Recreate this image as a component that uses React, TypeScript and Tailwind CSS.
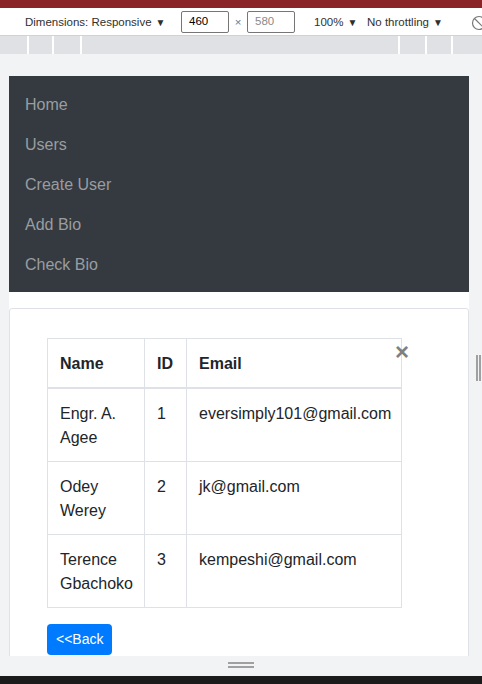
import React from "react";

const navLinks = ["Home", "Users", "Create User", "Add Bio", "Check Bio"];

const users = [
    { name: "Engr. A. Agee", id: 1, email: "eversimply101@gmail.com" },
    { name: "Odey Werey", id: 2, email: "jk@gmail.com" },
    { name: "Terence Gbachoko", id: 3, email: "kempeshi@gmail.com" },
];

function Caret() {
    return <span className="text-[10px] ml-[4px]">▼</span>;
}

function DevToolbar() {
    return (
        <div className="h-[28px] shrink-0 bg-white border-b border-[#cfd2d6] flex items-center text-[11.5px] text-[#303030] whitespace-nowrap overflow-hidden">
            <span className="w-[181px] shrink-0 pl-[25px] pt-[2px] overflow-hidden">
                Dimensions: Responsive<Caret />
            </span>
            <div className="w-[48px] h-[22px] shrink-0 border border-[#767676] rounded-[2px] px-[7px] flex items-center text-black">
                460
            </div>
            <span className="w-[18px] shrink-0 pt-[3px] text-center text-[#777]">×</span>
            <div className="w-[48px] h-[22px] shrink-0 border border-[#767676] rounded-[2px] px-[7px] flex items-center text-[#8a8a8a]">
                580
            </div>
            <span className="w-[53px] shrink-0 ml-[19px] pt-[2px]">
                100%<Caret />
            </span>
            <span className="w-[104px] shrink-0 pt-[2px]">
                No throttling<Caret />
            </span>
            <svg width="16" height="16" viewBox="0 0 16 16" className="shrink-0 mt-[2px] text-[#777]">
                <circle cx="8" cy="8" r="6.5" fill="none" stroke="currentColor" strokeWidth="1.2" />
                <path d="M3.5 3.5 L12.5 12.5" stroke="currentColor" strokeWidth="1.2" />
            </svg>
        </div>
    );
}

function Ruler() {
    return (
        <div className="h-[18px] shrink-0 bg-[#dfe1e5] flex">
            <div className="w-[27px]" />
            <div className="w-[25px] border-l-2 border-white" />
            <div className="w-[28px] border-l-2 border-white" />
            <div className="flex-1 border-l-2 border-white" />
            <div className="w-[27px] border-l-2 border-white" />
            <div className="w-[26px] border-l-2 border-white" />
            <div className="w-[31px] border-l-2 border-white" />
        </div>
    );
}

function Page() {
    return (
        <div className="w-[460px] h-[580px] shrink-0 bg-white overflow-hidden text-[#212529] text-base">

            {/* Navbar */}
            <nav className="bg-[#343a40] pt-[9px] pb-[7px]">
                {navLinks.map((link) => (
                    <div key={link} className="px-4 py-2 leading-6 text-[#9a9da0]">
                        {link}
                    </div>
                ))}
            </nav>

            {/* Card */}
            <div className="mt-4 border border-[#dee2e6] rounded-[3px] relative pl-[37px] pt-[29px] pb-6">
                <span className="absolute left-[385px] top-[31px] text-[24px] font-bold leading-none text-[#808080]">
                    ×
                </span>

                <table className="table-fixed border-collapse w-[354px]">
                    <colgroup>
                        <col className="w-[97px]" />
                        <col className="w-[42px]" />
                        <col className="w-[215px]" />
                    </colgroup>
                    <thead>
                        <tr>
                            <th className="border border-b-2 border-[#dee2e6] px-3 pt-[13px] pb-[11px] leading-6 text-left font-bold">Name</th>
                            <th className="border border-b-2 border-[#dee2e6] px-3 pt-[13px] pb-[11px] leading-6 text-left font-bold">ID</th>
                            <th className="border border-b-2 border-[#dee2e6] px-3 pt-[13px] pb-[11px] leading-6 text-left font-bold">Email</th>
                        </tr>
                    </thead>
                    <tbody>
                        {users.map((u) => (
                            <tr key={u.id}>
                                <td className="border border-[#dee2e6] px-3 pt-[13px] pb-[11px] leading-6 align-top h-[73px]">{u.name}</td>
                                <td className="border border-[#dee2e6] px-3 pt-[13px] pb-[11px] leading-6 align-top">{u.id}</td>
                                <td className="border border-[#dee2e6] px-3 pt-[13px] pb-[11px] leading-6 align-top whitespace-nowrap">{u.email}</td>
                            </tr>
                        ))}
                    </tbody>
                </table>

                <button className="mt-4 h-[31px] px-[9px] bg-[#007bff] text-white text-sm leading-[21px] rounded-[4px]">
                    &lt;&lt;Back
                </button>
            </div>
        </div>
    );
}

export default function App() {
    return (
        <div className="w-[482px] h-[684px] bg-[#f1f3f4] flex flex-col overflow-hidden font-['Liberation_Sans',Arial,sans-serif]">
            <div className="h-2 shrink-0 bg-[#8b2428]" />
            <DevToolbar />
            <Ruler />

            <div className="h-[22px] shrink-0" />

            {/* Device viewport */}
            <div className="flex shrink-0">
                <div className="w-[9px] shrink-0" />
                <Page />
                <div className="flex-1 flex justify-end pt-[279px] pr-[1px]">
                    <div className="h-[26px] w-[5px] flex gap-[1px]">
                        <div className="w-[2px] bg-[#a0a0a0]" />
                        <div className="w-[2px] bg-[#a0a0a0]" />
                    </div>
                </div>
            </div>

            {/* Bottom resize handle */}
            <div className="h-[20px] shrink-0 flex flex-col items-center pt-[6px] gap-[2px]">
                <div className="w-[26px] h-[2px] bg-[#a0a0a0]" />
                <div className="w-[26px] h-[2px] bg-[#a0a0a0]" />
            </div>

            <div className="flex-1 bg-[#1b1b1b]" />
        </div>
    );
}
